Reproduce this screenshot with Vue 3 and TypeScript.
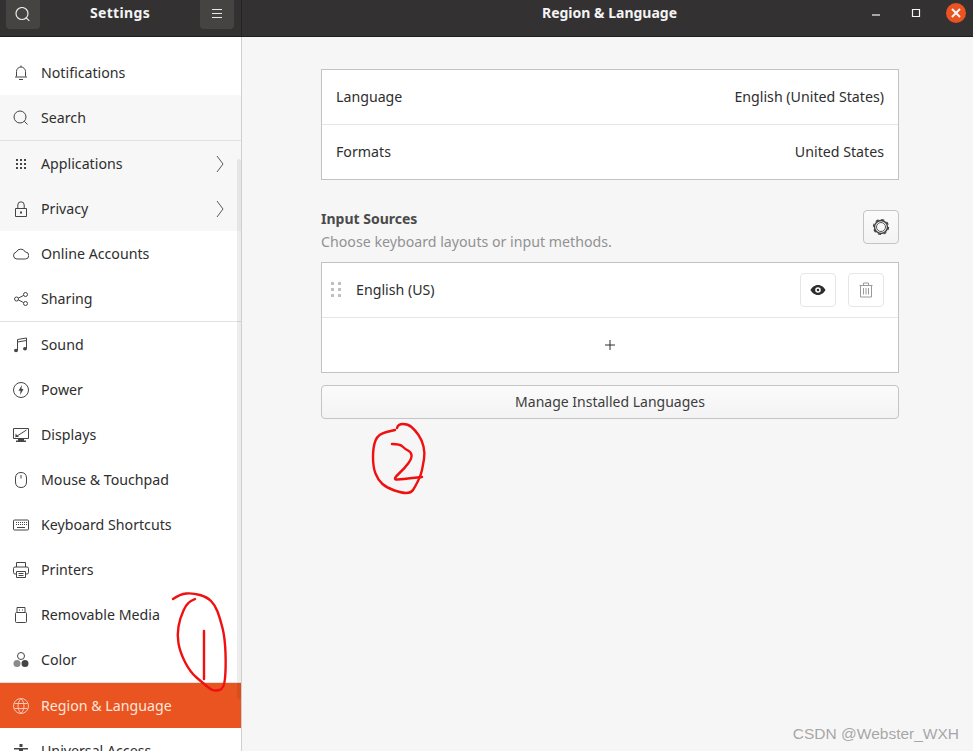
<script setup lang="ts">
interface NavItem {
  label: string
  icon: string
  solid?: string
  muted?: string
  arrow?: boolean
  tone?: 'soft' | 'active'
  divider?: boolean
}

const navItems: NavItem[] = [
  { label: 'Notifications', icon: 'M3.500 11.500V6.500a4.500 4.500 0 0 1 9 0v5M2 12h12M6 14.500h4M8 .5V2' },
  { label: 'Search', icon: 'M7 1a6 6 0 1 0 0 12 6 6 0 0 0 0-12zM11.300 11.300l3.200 3.200', tone: 'soft', divider: true },
  {
    label: 'Applications',
    icon: '',
    solid: 'M3 3h2v2H3zM7 3h2v2H7zM11 3h2v2h-2zM3 7h2v2H3zM7 7h2v2H7zM11 7h2v2h-2zM3 11h2v2H3zM7 11h2v2H7zM11 11h2v2h-2z',
    arrow: true,
    tone: 'soft'
  },
  {
    label: 'Privacy',
    icon: 'M2.500 7.500h11v8h-11zM4.800 7.500V4a3.200 3.200 0 0 1 6.400 0v3.500',
    solid: 'M7 10.500h2v2H7z',
    arrow: true,
    tone: 'soft'
  },
  { label: 'Online Accounts', icon: 'M4 13a3.500 3.500 0 0 1-.8-6.900A5 5 0 0 1 12.300 6a3.500 3.500 0 0 1 0 7z' },
  {
    label: 'Sharing',
    icon: 'M3.500 6a2 2 0 1 0 0 4 2 2 0 0 0 0-4zM12.500 1.500a2 2 0 1 0 0 4 2 2 0 0 0 0-4zM12.500 10.500a2 2 0 1 0 0 4 2 2 0 0 0 0-4zM5.300 7.100l5.400-2.700M5.300 8.900l5.400 2.700',
    divider: true
  },
  {
    label: 'Sound',
    icon: 'M4.500 13V2.500l9-1.500v10.500M4.500 5l9-1.500',
    solid: 'M1 13.500a2 1.800 0 1 0 4 0 2 1.800 0 1 0-4 0zM10 11.800a2 1.800 0 1 0 4 0 2 1.800 0 1 0-4 0z'
  },
  {
    label: 'Power',
    icon: 'M8 .5a7.500 7.500 0 1 0 0 15 7.500 7.500 0 0 0 0-15z',
    solid: 'M8.800 3 5.500 8.800h2l-.3 4.200 3.300-6H8.500z'
  },
  {
    label: 'Displays',
    icon: 'M.5 1.500h15v10H.5zM2.500 10 13.500 3',
    solid: 'M5 12h6v1.500h2V15H3v-1.500h2zM2.500 6.500l3.500 3.500H2.500z'
  },
  { label: 'Mouse & Touchpad', icon: 'M8 .5C4.500.5 2.500 2.500 2.500 6v4c0 3.500 2 5.500 5.500 5.500s5.500-2 5.500-5.500V6C13.500 2.500 11.500.5 8 .5zM8 3v3.500' },
  {
    label: 'Keyboard Shortcuts',
    icon: 'M1.500 3h13a1 1 0 0 1 1 1v8a1 1 0 0 1-1 1h-13a1 1 0 0 1-1-1V4a1 1 0 0 1 1-1z',
    solid: 'M3 5h1v1H3zM5 5h1v1H5zM7 5h1v1H7zM9 5h1v1H9zM11 5h1v1h-1zM13 5h1v1h-1zM3 7h1v1H3zM5 7h1v1H5zM7 7h1v1H7zM9 7h1v1H9zM11 7h1v1h-1zM13 7h1v1h-1zM4 10h8v1H4z'
  },
  {
    label: 'Printers',
    icon: 'M3.500 5V.5h9V5M3.500 12H2a1.500 1.500 0 0 1-1.500-1.500v-4A1.500 1.500 0 0 1 2 5h12a1.500 1.500 0 0 1 1.500 1.500v4A1.500 1.500 0 0 1 14 12h-1.500M3.500 9.500h9v6h-9zM5.500 11.500h5M5.500 13.500h5'
  },
  { label: 'Removable Media', icon: 'M3.500 5.500h9a1 1 0 0 1 1 1v8a1 1 0 0 1-1 1h-9a1 1 0 0 1-1-1v-8a1 1 0 0 1 1-1zM4 5.500v-5h8v5M6 3h1M9 3h1' },
  {
    label: 'Color',
    icon: 'M8 .5a3.500 3.500 0 1 0 0 7 3.500 3.500 0 0 0 0-7z',
    muted: 'M.5 11.500a3.500 3.500 0 1 0 7 0 3.500 3.500 0 1 0-7 0z',
    solid: 'M8.500 11.500a3.500 3.500 0 1 0 7 0 3.500 3.500 0 1 0-7 0z'
  },
  {
    label: 'Region & Language',
    icon: 'M8 .5a7.500 7.500 0 1 0 0 15 7.500 7.500 0 0 0 0-15zM8 .5c-4 4.500-4 10.500 0 15M8 .5c4 4.500 4 10.500 0 15M1.500 5.500h13M1.500 10.500h13',
    tone: 'active'
  },
  {
    label: 'Universal Access',
    icon: '',
    solid: 'M6.500 1h3v3h-3zM1 5h14v1.500h-5V10l2 5h-1.500L8 11l-2.500 4H4l2-5V6.500H1z'
  }
]

// Turns hand-drawn points into a smooth pen stroke through their midpoints
const penStroke = (points: number[][]): string => {
  let d = `M${points[0][0]} ${points[0][1]}`
  for (let i = 1; i < points.length - 1; i++) {
    const [x, y] = points[i]
    const [nx, ny] = points[i + 1]
    d += ` Q${x} ${y} ${(x + nx) / 2} ${(y + ny) / 2}`
  }
  const last = points[points.length - 1]
  return `${d} L${last[0]} ${last[1]}`
}

const marks = [
  [[173, 599], [180, 594], [193, 593], [207, 597], [215, 605], [220, 618], [225, 638], [226, 668], [224, 689], [215, 691], [210, 689], [203, 683], [190, 672], [180, 652], [177, 635], [180, 618], [187, 603], [195, 599]],
  [[204, 631], [204, 679]],
  [[397, 428], [398, 424], [408, 424], [415, 430], [422, 440], [425, 453], [423, 465], [421, 475], [415, 487], [411, 493], [402, 493], [387, 488], [378, 480], [373, 467], [373, 447], [378, 434], [395, 430]],
  [[392, 444], [400, 444], [405, 449], [411, 452], [412, 458], [405, 468], [392, 480], [403, 479], [422, 477]]
].map(penStroke)
</script>

<template>
  <div class="window">
    <header class="titlebar">
      <div class="bar-left">
        <button class="bar-btn">
          <svg width="16" height="16" viewBox="0 0 16 16"><path class="line" d="M7 .5a6 6 0 1 0 0 12 6 6 0 0 0 0-12zM11.300 10.800l3 3" /></svg>
        </button>
        <span class="app-title">Settings</span>
        <button class="bar-btn">
          <svg width="16" height="16" viewBox="0 0 16 16"><path class="line" d="M3 2.500h10M3 6.500h10M3 10.500h10" /></svg>
        </button>
      </div>
      <div class="bar-right">
        <span class="page-title">Region &amp; Language</span>
        <div class="win-controls">
          <svg width="16" height="16" viewBox="0 0 16 16"><path class="win-line" d="M2 10h8" /></svg>
          <svg width="16" height="16" viewBox="0 0 16 16"><path class="win-line" d="M4.500 4.500h7v7h-7z" /></svg>
          <span class="close">
            <svg width="10" height="10" viewBox="0 0 10 10"><path class="win-line bold" d="M1 1l8 8M9 1l-8 8" /></svg>
          </span>
        </div>
      </div>
    </header>

    <div class="body">
      <aside class="sidebar">
        <div v-for="item in navItems" :key="item.label" class="nav-row" :class="[item.tone, { divider: item.divider }]">
          <svg class="nav-icon" width="16" height="16" viewBox="0 0 16 16">
            <path v-if="item.icon" class="stroke" :d="item.icon" />
            <path v-if="item.muted" class="muted" :d="item.muted" />
            <path v-if="item.solid" class="solid" :d="item.solid" />
          </svg>
          <span class="nav-label">{{ item.label }}</span>
          <svg v-if="item.arrow" class="chevron" width="8" height="18" viewBox="0 0 8 18"><path d="M1 1l6 8-6 8" /></svg>
        </div>
        <div class="scroll-thumb"></div>
      </aside>

      <main class="content">
        <section class="list">
          <div class="list-row">
            <span>Language</span>
            <span>English (United States)</span>
          </div>
          <div class="list-row">
            <span>Formats</span>
            <span>United States</span>
          </div>
        </section>

        <div class="section-head">
          <div>
            <h2>Input Sources</h2>
            <p>Choose keyboard layouts or input methods.</p>
          </div>
          <button class="icon-btn">
            <svg width="18" height="18" viewBox="0 0 18 18">
              <circle class="gear-teeth" cx="9" cy="9" r="7.500" />
              <circle class="gear-ring" cx="9" cy="9" r="6.500" />
              <circle class="gear-inner" cx="9" cy="9" r="4.500" />
            </svg>
          </button>
        </div>

        <section class="list sources">
          <div class="list-row source-row">
            <svg class="grip" width="10" height="16" viewBox="0 0 10 16">
              <path d="M0 0h3v3H0zM7 0h3v3H7zM0 6h3v3H0zM7 6h3v3H7zM0 12h3v3H0zM7 12h3v3H7z" />
            </svg>
            <span class="source-name">English (US)</span>
            <button class="icon-btn flat">
              <svg width="16" height="16" viewBox="0 0 16 16">
                <path class="eye" fill-rule="evenodd" d="M8 3c3.500 0 6.200 2.500 7.500 5-1.300 2.500-4 5-7.500 5S1.800 10.500.5 8C1.800 5.500 4.500 3 8 3zm0 2.200a2.800 2.800 0 1 0 0 5.600 2.800 2.800 0 0 0 0-5.600zM8 6.700a1.300 1.300 0 1 1 0 2.600 1.300 1.300 0 0 1 0-2.600z" />
              </svg>
            </button>
            <button class="icon-btn flat">
              <svg width="16" height="16" viewBox="0 0 16 16">
                <path class="trash" d="M1.500 3.500h13M5.500 3.500V1h5v2.500M2.500 3.500V15h11V3.500M5.500 6v6.500M8 6v6.500M10.500 6v6.500" />
              </svg>
            </button>
          </div>
          <div class="list-row add-row">
            <svg width="12" height="12" viewBox="0 0 12 12"><path class="plus" d="M6 1v10M1 6h10" /></svg>
          </div>
        </section>

        <button class="manage-btn">Manage Installed Languages</button>
      </main>
    </div>

    <!-- red pen marks and watermark sit on top of the screenshot -->
    <svg class="marks" width="973" height="751" viewBox="0 0 973 751">
      <path v-for="(d, i) in marks" :key="i" :d="d" />
    </svg>
    <span class="watermark">CSDN @Webster_WXH</span>
  </div>
</template>

<style scoped>
.window {
  position: relative;
  display: flex;
  flex-direction: column;
  width: 973px;
  height: 751px;
  overflow: hidden;
  background: #f6f6f6;
  color: #2e2e2e;
  font-family: "Noto Sans", "Open Sans", sans-serif;
  font-size: 14px;
}

button {
  font-family: inherit;
  padding: 0;
  cursor: pointer;
}

.titlebar {
  display: flex;
  flex: none;
  height: 37px;
  box-sizing: border-box;
  background: #333131;
  border-bottom: 1px solid #1f1e1e;
  color: #f4f4f4;
}

.bar-left {
  display: flex;
  flex: none;
  justify-content: space-between;
  width: 242px;
  box-sizing: border-box;
  padding: 0 7px 0 6px;
  border-right: 1px solid #242323;
}

.bar-btn {
  display: flex;
  align-items: center;
  justify-content: center;
  width: 34px;
  height: 29px;
  border: 0;
  border-radius: 0 0 4px 4px;
  background: #454443;
}

.app-title,
.page-title {
  font-weight: 700;
  font-size: 14px;
  line-height: 26px;
}

.app-title {
  letter-spacing: 0.35px;
}

.bar-right {
  position: relative;
  flex: 1;
  text-align: center;
  padding-left: 4px;
}

.line {
  fill: none;
  stroke: #e8e8e8;
  stroke-width: 1.200;
}

.win-controls {
  position: absolute;
  top: 3px;
  right: 7px;
  display: flex;
  align-items: center;
  gap: 22px;
  height: 20px;
}

.win-line {
  fill: none;
  stroke: #f6f6f6;
  stroke-width: 1.200;
}

.win-line.bold {
  stroke-width: 2;
}

.close {
  display: flex;
  align-items: center;
  justify-content: center;
  width: 20px;
  height: 20px;
  border-radius: 50%;
  background: #e95420;
}

.body {
  display: flex;
  flex: 1;
  min-height: 0;
}

.sidebar {
  position: relative;
  flex: none;
  width: 242px;
  box-sizing: border-box;
  padding-top: 13px;
  overflow: hidden;
  background: #fff;
  border-right: 1px solid #cfcfcf;
}

.nav-row {
  display: flex;
  align-items: center;
  gap: 12px;
  height: 45px;
  box-sizing: border-box;
  padding-left: 13px;
}

.nav-row.divider {
  height: 46px;
  border-bottom: 1px solid #e2e2e2;
}

.nav-row.soft {
  background: #f7f7f7;
}

.nav-row.active {
  height: 46px;
  background: #e95420;
  border-top: 1px solid #e2e2e2;
  color: #fce6dd;
}

.nav-label {
  font-size: 14.200px;
  white-space: nowrap;
}

.nav-icon {
  flex: none;
}

.stroke {
  fill: none;
  stroke: #454545;
  stroke-width: 1;
}

.solid {
  fill: #454545;
}

.muted {
  fill: #8a8a8a;
}

.active .stroke {
  stroke: #f8c9b6;
}

.chevron {
  margin-left: auto;
  margin-right: 17px;
}

.chevron path {
  fill: none;
  stroke: #5a5a5a;
  stroke-width: 1;
}

.scroll-thumb {
  position: absolute;
  top: 122px;
  right: 0;
  width: 4px;
  height: 540px;
  border-radius: 2px;
  background: rgba(0, 0, 0, 0.07);
}

.content {
  flex: 1;
  box-sizing: border-box;
  padding: 32px 74px 0 79px;
}

.list {
  background: #fff;
  border: 1px solid #c3c3c3;
}

.list-row {
  display: flex;
  align-items: center;
  justify-content: space-between;
  height: 54px;
  box-sizing: border-box;
  padding: 0 14px;
  font-size: 14.200px;
}

.list-row > span {
  padding-bottom: 2px;
}

.list-row + .list-row {
  height: 55px;
  border-top: 1px solid #e6e6e6;
}

.section-head {
  display: flex;
  align-items: flex-start;
  justify-content: space-between;
  margin-top: 30px;
}

.section-head h2 {
  margin: 0;
  font-size: 14px;
  line-height: 18px;
  font-weight: 700;
  color: #4a4a4a;
}

.section-head p {
  margin: 5px 0 0;
  font-size: 14.200px;
  line-height: 18px;
  color: #929292;
}

.icon-btn {
  display: flex;
  flex: none;
  align-items: center;
  justify-content: center;
  width: 36px;
  height: 34px;
  border: 1px solid #c4c4c4;
  border-radius: 4px;
  background: linear-gradient(#fbfbfb, #f3f3f3);
}

.icon-btn.flat {
  border-color: #e6e6e6;
  background: #fff;
}

.gear-teeth {
  fill: none;
  stroke: #3f3f3f;
  stroke-width: 1.200;
  stroke-dasharray: 3.140 2.750;
}

.gear-ring {
  fill: none;
  stroke: #3f3f3f;
  stroke-width: 1.400;
}

.gear-inner {
  fill: none;
  stroke: #555;
  stroke-width: 1;
}

.sources {
  margin-top: 11px;
}

.source-row {
  gap: 12px;
  justify-content: flex-start;
  padding: 0 14px 0 9px;
}

.grip {
  flex: none;
  fill: #c0c0c0;
}

.source-name {
  flex: 1;
  margin-left: 3px;
}

.eye {
  fill: #2e2e2e;
}

.trash {
  fill: none;
  stroke: #9a9a9a;
  stroke-width: 1;
}

.add-row {
  justify-content: center;
}

.plus {
  fill: none;
  stroke: #2e2e2e;
  stroke-width: 1;
}

.manage-btn {
  display: block;
  width: 100%;
  height: 34px;
  margin-top: 12px;
  padding-bottom: 2px;
  border: 1px solid #c4c4c4;
  border-radius: 4px;
  background: linear-gradient(#fbfbfb, #f3f3f3);
  color: #3d3d3d;
  font-size: 14px;
}

.marks {
  position: absolute;
  top: 0;
  left: 0;
  pointer-events: none;
}

.marks path {
  fill: none;
  stroke: #f01010;
  stroke-width: 2.400;
  stroke-linecap: round;
  stroke-linejoin: round;
}

.watermark {
  position: absolute;
  right: 14px;
  top: 724px;
  font-family: "Liberation Sans", sans-serif;
  font-size: 15.500px;
  line-height: 20px;
  color: rgba(110, 110, 110, 0.6);
}
</style>
